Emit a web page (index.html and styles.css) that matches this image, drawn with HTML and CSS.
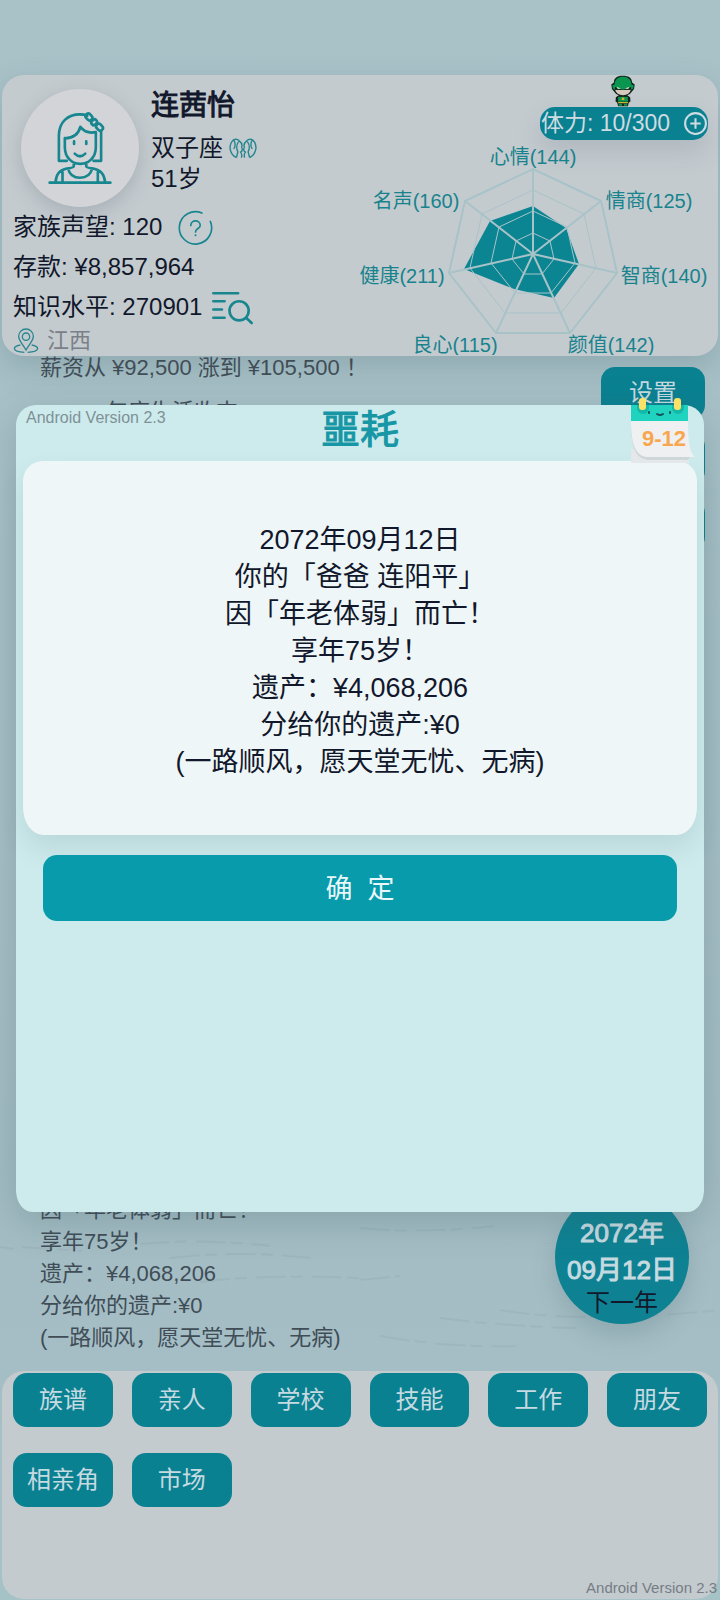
FILE: index.html
```html
<!DOCTYPE html>
<html lang="zh-CN">
<head>
<meta charset="utf-8">
<meta name="viewport" content="width=device-width, initial-scale=1">
<title>噩耗</title>
<link rel="stylesheet" href="styles.css">
</head>
<body>
<div class="screen">
  <svg class="grain" viewBox="0 0 720 300" preserveAspectRatio="none" aria-hidden="true">
    <path d="M0 187l14 2M22 187l60 4M140 184q60-6 130 2M170 198q70-8 140 0M200 222q60-8 160-4M360 168q60 6 134-2M360 220l40-4M440 258q60 8 136 10M380 276q70 12 136 10M500 250q80 14 220 0"/>
  </svg>

  <header class="card profile">
    <section class="person">
      <div class="identity">
        <div class="avatar">
          <svg class="avatar-art" viewBox="140 145 200 228" aria-label="头像" role="img">
            <path d="M148 364H332M200 298H176V222C176 180 203 157 240 157Q252 157 262 161M304 208V298H281M194 229V256C194 324 288 324 288 256V212M194 230Q233 228 241 195Q258 217 288 211M221 303V315Q220 319 200 321Q168 327 166 362M259 303V315Q260 319 280 321Q313 327 316 362M204 321Q210 349 240 349Q270 349 277 321M187 332V362M294 332V362"/>
            <path d="M222 239V247M259 239V247M224 276Q240 292 256 276"/>
            <rect x="-11" y="-8" width="22" height="16" rx="7" transform="translate(267 165) rotate(48)"/>
            <rect x="-7" y="-9" width="14" height="18" rx="6" transform="translate(283 181) rotate(48)"/>
            <rect x="-11" y="-8" width="22" height="16" rx="7" transform="translate(299 196) rotate(48)"/>
          </svg>
        </div>
        <div class="names">
          <h1 class="name">连茜怡</h1>
          <p class="sign">双子座
            <svg class="gemini" viewBox="686 231 82 64" aria-hidden="true">
              <path d="M722 291Q726 284 720 275Q728 271 723 261Q727 250 716 242Q708 234 698 240Q689 248 689 264Q692 284 708 291M700 240Q708 252 700 266M714 244Q704 260 712 274L708 290M732 291Q728 284 734 275Q726 271 731 261Q727 250 738 242Q746 234 756 240Q765 248 765 264Q762 284 746 291M754 240Q746 252 754 266M740 244Q750 260 742 274L746 290"/>
            </svg>
          </p>
          <p class="age">51岁</p>
        </div>
      </div>
      <p class="fact">家族声望: 120
        <button class="icon-button help" type="button" aria-label="帮助">
          <svg viewBox="536 448 104 104"><path d="M607 457A48 48 0 1 0 632 482M574 494C574 476 602 476 602 494C602 504 588 502 588 513"/><circle class="dot" cx="588" cy="523" r="3"/></svg>
        </button>
      </p>
      <p class="fact">存款: ¥8,857,964</p>
      <p class="fact">知识水平: 270901
        <button class="icon-button find" type="button" aria-label="查看知识">
          <svg viewBox="634 686 128 106"><path d="M640 696H715M640 720H674M640 745H666M640 770H674M740 771L756 786"/><circle cx="718" cy="749" r="29"/></svg>
        </button>
      </p>
      <p class="place">
        <svg class="pin" viewBox="42 802 78 76" aria-hidden="true"><path d="M81 867C72 850 59 840 59 826A22 22 0 0 1 103 826C103 840 90 850 81 867ZM64 852Q46 855 46 863Q48 873 76 874M98 852Q116 855 116 863Q114 873 86 874"/><circle cx="81" cy="827" r="11"/></svg>
        江西
      </p>
    </section>

    <section class="stats">
      <svg class="hero" viewBox="120 16 80 96" aria-hidden="true">
        <path fill="#10241c" d="M124 44l8-6C132 22 144 17 160 17s28 6 28 21l8 6-2 14-7 8q-5 9-14 11l9 6 1 13-5 3-3 12h-30l-3-12-5-3 1-13 9-6q-9-2-14-11l-7-8z"/>
        <path fill="#0b9650" d="M134 44C134 28 146 20 160 20s26 8 26 24l7 2-2 10-6 4h-50l-6-4-2-10z"/>
        <path fill="#10241c" d="M135 52l24 7h2l24-7v8h-50z"/>
        <path fill="#d8c9bd" d="M136 61h48q-4 15-24 16-20-1-24-16z"/>
        <path fill="#e2ded3" d="M140 51l14 5-10 2zM180 51l-14 5 10 2z"/>
        <path fill="#0b9650" d="M145 82h30v15h-30z"/>
        <path fill="#cfb32f" d="M145 98h30v4h-30zM156 84h8v8h-8z"/>
        <path fill="#0b9650" d="M147 103h10v6h-10zM163 103h10v6h-10z"/>
      </svg>
      <button class="stamina" type="button">
        <span>体力: 10/300</span>
        <svg viewBox="0 0 24 24" aria-hidden="true"><circle cx="12" cy="12" r="10"/><path d="M12 7v10M7 12h10"/></svg>
      </button>
      <svg class="radar" viewBox="356 141 352 214" role="img" aria-label="属性">
        <g transform="translate(533 254)">
          <path class="area" d="M0-48L33-26 46 10 21 44-19 35-69 15-43-33z"/>
          <path class="edge" d="M0-85L68-53 84 19 37 79-37 79-84 19-68-53z"/>
          <path class="ring" d="M0-64L51-40 63 14 28 59-28 59-63 14-51-40zM0-43L34-27 42 9 18 39-18 39-42 9-34-27zM0-21L17-13 21 5 9 20-9 20-21 5-17-13z"/>
          <path class="edge" d="M0 0V-85M0 0L68-53M0 0L84 19M0 0L37 79M0 0L-37 79M0 0L-84 19M0 0L-68-53"/>
        </g>
        <g class="labels">
          <text x="533" y="164">心情(144)</text>
          <text x="416" y="208">名声(160)</text>
          <text x="649" y="208">情商(125)</text>
          <text x="402" y="283">健康(211)</text>
          <text x="664" y="283">智商(140)</text>
          <text x="455" y="352">良心(115)</text>
          <text x="611" y="352">颜值(142)</text>
        </g>
      </svg>
    </section>
  </header>

  <main class="life">
    <div class="log">
      <div>
        <p class="log-first">薪资从 ¥92,500 涨到 ¥105,500 ！</p>
        <p class="log-heading">年度生活收支</p>
      </div>
      <div>
        <p>因「年老体弱」而亡！</p>
        <p>享年75岁！</p>
        <p>遗产：¥4,068,206</p>
        <p>分给你的遗产:¥0</p>
        <p>(一路顺风，愿天堂无忧、无病)</p>
      </div>
    </div>
    <div class="side">
      <div class="side-menu">
        <button class="tile" type="button">设置</button>
        <span class="tile"></span>
        <span class="tile"></span>
      </div>
      <button class="year" type="button">
        <span class="date">2072年</span>
        <span class="date">09月12日</span>
        <span class="next">下一年</span>
      </button>
    </div>
  </main>

  <footer class="card dock">
    <nav class="menu">
      <button class="tile" type="button">族谱</button>
      <button class="tile" type="button">亲人</button>
      <button class="tile" type="button">学校</button>
      <button class="tile" type="button">技能</button>
      <button class="tile" type="button">工作</button>
      <button class="tile" type="button">朋友</button>
      <button class="tile" type="button">相亲角</button>
      <button class="tile" type="button">市场</button>
    </nav>
    <small class="version">Android Version 2.3</small>
  </footer>

  <div class="overlay">
    <section class="modal" role="dialog" aria-modal="true" aria-labelledby="modal-title">
      <div class="modal-head">
        <small class="modal-version">Android Version 2.3</small>
        <h2 id="modal-title" class="modal-title">噩耗</h2>
      </div>
      <div class="message">
        <p>2072年09月12日</p>
        <p>你的「爸爸 连阳平」</p>
        <p>因「年老体弱」而亡！</p>
        <p>享年75岁！</p>
        <p>遗产：¥4,068,206</p>
        <p>分给你的遗产:¥0</p>
        <p>(一路顺风，愿天堂无忧、无病)</p>
      </div>
      <button class="confirm" type="button">确&nbsp;&nbsp;定</button>
      <svg class="calendar" viewBox="0 0 68 68" role="img" aria-label="9-12">
        <path fill="#e4e8ea" d="M2 52h58v14H2z"/>
        <path fill="#cfd6d8" d="M2 25C2 54 8 62 20 63H59L61 60z"/>
        <path fill="#eef0f2" d="M2 23H59C59 46 61 56 66 60H18C6 59 2 46 2 23z"/>
        <path fill="#1fd3bf" d="M2 8h57v16H2z"/>
        <path fill="#12b8a8" d="M8 8h12v3a6 6 0 0 1-12 0zM43 8h12v3a6 6 0 0 1-12 0z"/>
        <rect x="10" y="1" width="7" height="12" rx="3" fill="#fbe267"/>
        <rect x="45" y="1" width="7" height="12" rx="3" fill="#fbe267"/>
        <path fill="none" stroke="#17535c" stroke-width="2" stroke-linecap="round" d="M20 15v1M41 15v1M28 17q3 2 6 0"/>
        <text x="35" y="49" class="calendar-day">9-12</text>
      </svg>
    </section>
  </div>
</div>
</body>
</html>
```
FILE: styles.css
```css
* { box-sizing: border-box; }

body {
  margin: 0;
  font-family: "Liberation Sans", "Noto Sans CJK SC", sans-serif;
  color: #12182b;
}

h1, h2, p { margin: 0; font-weight: 400; }

button {
  border: 0;
  padding: 0;
  background: none;
  font: inherit;
  color: inherit;
}

svg { display: block; }

.screen {
  position: relative;
  display: flex;
  flex-direction: column;
  min-height: 100vh;
  padding: 75px 2px 1px;
  overflow: hidden;
  background: linear-gradient(#a9c2c8, #a6bfc6 50%, #a3bcc3 72%, #a5bec5 85%, #a5c2c7);
}

.grain {
  position: absolute;
  left: 0;
  bottom: 240px;
  width: 100%;
  height: 300px;
  fill: none;
  stroke: #8fa9b0;
  stroke-width: 2;
  stroke-dasharray: 30 5 12 9;
  opacity: .3;
}

.card {
  position: relative;
  border-radius: 22px;
  background: #c4cbcf;
}

/* profile */
.profile {
  display: flex;
  justify-content: space-between;
  min-height: 281px;
  box-shadow: 0 12px 30px rgba(60, 90, 100, .22);
}

.person { padding: 14px 0 0 11px; }

.identity { display: flex; gap: 12px; padding-left: 8px; }

.avatar {
  display: grid;
  place-items: center;
  width: 118px;
  height: 118px;
  border-radius: 50%;
  background: #d2d4d8;
  box-shadow: 0 6px 18px rgba(80, 100, 115, .25);
}

.avatar-art {
  width: 66px;
  height: 76px;
  fill: none;
  stroke: #17868f;
  stroke-width: 8;
  stroke-linecap: round;
  stroke-linejoin: round;
}

.name {
  font-size: 28px;
  line-height: 34px;
  -webkit-text-stroke: 1px currentColor;
}

.sign, .age, .fact { font-size: 24px; }
.sign { display: flex; align-items: center; gap: 6px; margin-top: 10px; line-height: 30px; }
.age { line-height: 31px; }

.gemini { width: 28px; height: 22px; fill: none; stroke: #23858e; stroke-width: 4; }

.fact { display: flex; align-items: center; height: 40px; line-height: 40px; }

.icon-button svg { fill: none; stroke: #17868f; stroke-linecap: round; }
.help { margin-left: 16px; }
.help svg { width: 35px; height: 35px; stroke-width: 5; }
.help .dot { fill: #17868f; stroke: none; }
.find { margin-left: 9px; }
.find svg { width: 43px; height: 35px; stroke-width: 8; }

.place {
  display: flex;
  align-items: center;
  gap: 8px;
  height: 27px;
  font-size: 22px;
  line-height: 27px;
  color: #7b8088;
}

.pin { width: 26px; height: 26px; fill: none; stroke: #2a868f; stroke-width: 4; }

.stats {
  display: flex;
  flex-direction: column;
  align-items: flex-end;
  padding: 0 10px 0 0;
}

.hero { width: 26px; height: 32px; margin-right: 72px; }

.stamina {
  display: flex;
  align-items: center;
  justify-content: space-between;
  width: 168px;
  height: 33px;
  padding: 0 0 0 1px;
  border-radius: 15px;
  background: #0a8191;
  color: #cfdbe2;
  font-size: 23px;
  line-height: 31px;
  box-shadow: 0 12px 24px rgba(90, 100, 130, .18);
}

.stamina svg { width: 25px; height: 25px; fill: none; stroke: #cfdbe2; stroke-width: 2; }

.radar { width: 352px; height: 214px; margin-top: 1px; }
.area { fill: #0c8593; }
.edge { fill: none; stroke: #a8c3c8; stroke-width: 2; }
.ring { fill: none; stroke: #a8c3c8; stroke-width: 1; }
.labels { font-size: 20px; fill: #18838d; text-anchor: middle; }

/* life log */
.life {
  position: relative;
  flex: 1;
  display: flex;
  justify-content: space-between;
  padding: 0 13px 17px 38px;
}

.log {
  display: flex;
  flex-direction: column;
  justify-content: space-between;
  font-size: 22px;
  line-height: 32px;
  color: #404d57;
}

.log-first { line-height: 24px; }
.log-heading { padding: 16px 0 0 66px; }

.side {
  display: flex;
  flex-direction: column;
  justify-content: space-between;
  align-items: flex-end;
  padding: 11px 0 30px;
}

.side-menu { display: grid; gap: 14px; width: 104px; }
.side-menu .tile { height: 52px; }

.tile {
  height: 54px;
  border-radius: 14px;
  background: #0a8191;
  color: #c6dae1;
  font-size: 24px;
  line-height: 48px;
}

.year {
  display: flex;
  flex-direction: column;
  align-items: center;
  width: 134px;
  height: 134px;
  margin-right: 16px;
  padding-top: 25px;
  border-radius: 50%;
  background: #0e8292;
  box-shadow: 0 12px 24px rgba(60, 90, 100, .2);
}

.date {
  font-size: 26px;
  line-height: 37px;
  color: #c6dae1;
  -webkit-text-stroke: 1px currentColor;
}

.next { font-size: 24px; line-height: 28px; }

/* bottom dock */
.dock { min-height: 228px; padding: 2px 11px; }

.menu {
  display: grid;
  grid-template-columns: repeat(6, 1fr);
  gap: 26px 19px;
}

.version {
  position: absolute;
  right: 1px;
  bottom: 2px;
  font-size: 15px;
  line-height: 18px;
  color: #767d85;
}

/* dialog */
.overlay {
  position: absolute;
  inset: 0;
  display: grid;
  padding: 405px 16px 388px;
}

.modal {
  position: relative;
  display: flex;
  flex-direction: column;
  padding: 0 7px;
  border-radius: 20px 20px 16px 16px / 20px 20px 22px 22px;
  background: #cdebed;
  box-shadow: 0 10px 36px rgba(60, 90, 100, .25);
}

.modal-head { position: relative; height: 56px; }

.modal-version {
  position: absolute;
  left: 3px;
  top: 4px;
  font-size: 16px;
  line-height: 18px;
  color: #7f9196;
}

.modal-title {
  font-size: 39px;
  line-height: 50px;
  text-align: center;
  color: #1796a5;
  -webkit-text-stroke: 1px currentColor;
}

.message {
  padding: 61px 0 54px;
  border-radius: 20px 20px 20px 20px / 20px 20px 28px 28px;
  background: #eff6f8;
  box-shadow: 0 14px 26px rgba(60, 80, 80, .12);
  font-size: 27px;
  line-height: 37px;
  text-align: center;
}

.confirm {
  position: relative;
  height: 66px;
  margin: 20px 20px 0;
  padding-bottom: 4px;
  border-radius: 14px;
  background: #089bac;
  color: #e9f7f9;
  font-size: 27px;
}

.calendar { position: absolute; top: -8px; right: 7px; width: 68px; height: 68px; }

.calendar-day {
  font-size: 22px;
  font-weight: 700;
  text-anchor: middle;
  fill: #f9a74f;
}
```
